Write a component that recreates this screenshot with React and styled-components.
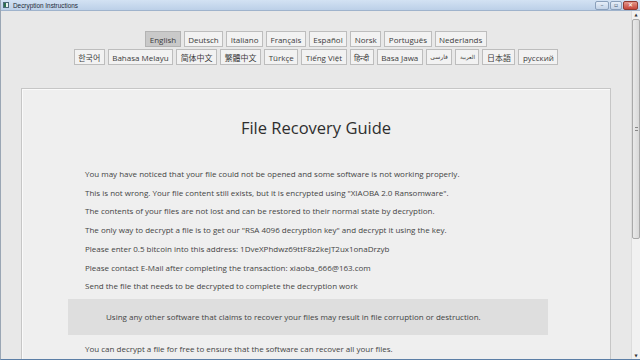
import React from "react";
import styled, { createGlobalStyle } from "styled-components";

const GlobalStyle = createGlobalStyle`
  html, body {
    margin: 0;
    padding: 0;
    width: 640px;
    height: 360px;
    overflow: hidden;
    background: #e7e7e7;
  }
  * { box-sizing: border-box; }
`;

const Window = styled.div`
  width: 640px;
  height: 360px;
  display: flex;
  flex-direction: column;
  border-left: 1px solid #9aa6b4;
  border-bottom: 1px solid #5b7ea6;
  overflow: hidden;
  font-family: "Open Sans", "Noto Sans", "DejaVu Sans", sans-serif;
`;

const TitleBar = styled.div`
  height: 11px;
  flex: none;
  display: flex;
  align-items: center;
  padding-left: 2px;
  background: linear-gradient(#d3e2f3, #bcd0e8);
  border-bottom: 1px solid #9fb3cc;
`;

const AppIcon = styled.div`
  width: 6px;
  height: 6px;
  margin-right: 4px;
  background: linear-gradient(90deg, #2c6f4d 0 50%, #e9f2ee 50% 100%);
  border: 1px solid #4c6a7a;
`;

const Caption = styled.span`
  font-family: "Liberation Sans", Arial, sans-serif;
  font-size: 6.4px;
  color: #1e2a38;
  flex: 1;
`;

const WinButtons = styled.div`
  display: flex;
  gap: 1px;
  margin-right: 2px;
`;

const WinButton = styled.div`
  width: ${(p) => p.$w}px;
  height: 9px;
  border: 1px solid ${(p) => (p.$close ? "#8e3b32" : "#8aa0bb")};
  border-radius: 2px;
  background: ${(p) =>
    p.$close
      ? "linear-gradient(#e4978b, #c6463a)"
      : "linear-gradient(#e6eef8, #c3d3e7)"};
  display: flex;
  align-items: center;
  justify-content: center;
  color: ${(p) => (p.$close ? "#fff" : "#44566c")};
  font-size: 6px;
  font-family: "DejaVu Sans", sans-serif;
  line-height: 1;
`;

const Body = styled.div`
  flex: 1;
  display: flex;
  min-height: 0;
`;

const Content = styled.div`
  flex: 1;
  display: flex;
  flex-direction: column;
  align-items: stretch;
  padding-top: 20px;
  background: #e8e8e8;
  min-width: 0;
`;

const LangRow = styled.div`
  display: flex;
  justify-content: center;
  gap: 3px;
  margin-bottom: 2px;
`;

const LangButton = styled.div`
  height: 16px;
  padding: 0 3.5px;
  display: flex;
  align-items: center;
  font-size: ${(p) => p.$size || 8}px;
  font-family: "Open Sans", "DejaVu Sans", "Noto Sans CJK SC", sans-serif;
  color: #3c3c3c;
  border: 1px solid ${(p) => (p.$active ? "#b3b3b3" : "#bdbdbd")};
  background: ${(p) => (p.$active ? "#c9c9c9" : "#f2f2f2")};
  white-space: nowrap;
`;

const Panel = styled.div`
  margin: 21px 20px 0 20px;
  flex: 1;
  background: #efefef;
  border: 1px solid #c6c6c6;
  border-bottom: none;
  box-shadow: inset 1px 1px 0 #fafafa;
  padding: 29px 0 0 63px;
`;

const Title = styled.h1`
  margin: 0 0 27px -63px;
  font-size: 16.5px;
  line-height: 20px;
  font-weight: 400;
  color: #2e2e2e;
  text-align: center;
`;

const Line = styled.p`
  margin: 0;
  font-size: 8px;
  line-height: 18.7px;
  color: #444;
  white-space: nowrap;
`;

const Notice = styled.div`
  margin: 3px 0 5px -17px;
  width: 480px;
  height: 36px;
  background: #dedede;
  display: flex;
  align-items: center;
  padding-left: 38px;
  font-size: 8px;
  color: #444;
  white-space: nowrap;
`;

const Scrollbar = styled.div`
  width: 9px;
  flex: none;
  display: flex;
  flex-direction: column;
  align-items: stretch;
  background: #f1f1f1;
  border-left: 1px solid #dcdcdc;
`;

const Arrow = styled.div`
  height: 7px;
  display: flex;
  align-items: center;
  justify-content: center;
  font-size: 4px;
  color: #333;
  font-family: "DejaVu Sans", sans-serif;
`;

const Thumb = styled.div`
  height: 220px;
  margin: 1px 0 0 0;
  background: linear-gradient(90deg, #e9e9e9, #d9d9d9);
  border: 1px solid #a9a9a9;
  border-radius: 2px;
  display: flex;
  align-items: center;
  justify-content: center;
`;

const Grip = styled.div`
  width: 3px;
  height: 4px;
  border-top: 1px solid #888;
  border-bottom: 1px solid #888;
`;

const Track = styled.div`
  flex: 1;
`;

const row1 = ["English", "Deutsch", "Italiano", "Français", "Español", "Norsk", "Português", "Nederlands"];
const row2 = [
  { t: "한국어" },
  { t: "Bahasa Melayu" },
  { t: "简体中文" },
  { t: "繁體中文" },
  { t: "Türkçe" },
  { t: "Tiếng Việt" },
  { t: "हिन्दी" },
  { t: "Basa Jawa" },
  { t: "فارسی", s: 6 },
  { t: "العربية", s: 5.5 },
  { t: "日本語" },
  { t: "русский" },
];

const lines = [
  "You may have noticed that your file could not be opened and some software is not working properly.",
  "This is not wrong. Your file content still exists, but it is encrypted using \"XIAOBA 2.0 Ransomware\".",
  "The contents of your files are not lost and can be restored to their normal state by decryption.",
  "The only way to decrypt a file is to get our \"RSA 4096 decryption key\" and decrypt it using the key.",
  "Please enter 0.5 bitcoin into this address: 1DveXPhdwz69ttF8z2keJT2ux1onaDrzyb",
  "Please contact E-Mail after completing the transaction: xiaoba_666@163.com",
  "Send the file that needs to be decrypted to complete the decryption work",
];

const App = () => (
  <>
    <GlobalStyle />
    <Window>
      <TitleBar>
        <AppIcon />
        <Caption>Decryption Instructions</Caption>
        <WinButtons>
          <WinButton $w={14}>–</WinButton>
          <WinButton $w={12}>▫</WinButton>
          <WinButton $w={15} $close>✕</WinButton>
        </WinButtons>
      </TitleBar>
      <Body>
        <Content>
          <LangRow>
            {row1.map((l) => (
              <LangButton key={l} $active={l === "English"}>{l}</LangButton>
            ))}
          </LangRow>
          <LangRow>
            {row2.map((l) => (
              <LangButton key={l.t} $size={l.s}>{l.t}</LangButton>
            ))}
          </LangRow>
          <Panel>
            <Title>File Recovery Guide</Title>
            {lines.map((l) => (
              <Line key={l}>{l}</Line>
            ))}
            <Notice>
              Using any other software that claims to recover your files may result in file corruption or destruction.
            </Notice>
            <Line>You can decrypt a file for free to ensure that the software can recover all your files.</Line>
          </Panel>
        </Content>
        <Scrollbar>
          <Arrow>▲</Arrow>
          <Thumb>
            <Grip />
          </Thumb>
          <Track />
          <Arrow>▼</Arrow>
        </Scrollbar>
      </Body>
    </Window>
  </>
);

export default App;
